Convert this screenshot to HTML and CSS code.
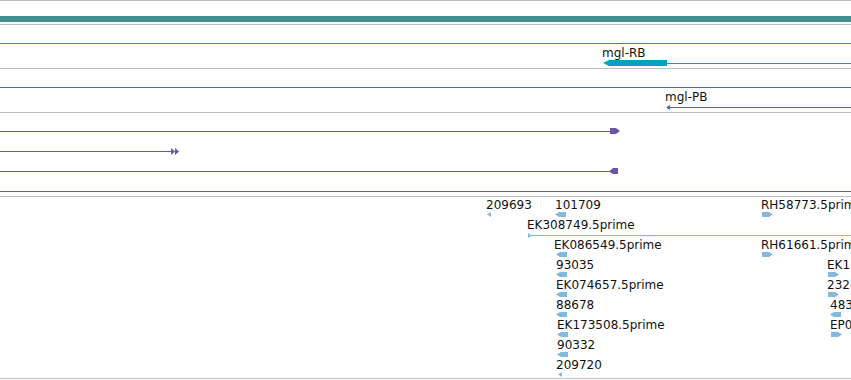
FILE: index.html
```html
<!DOCTYPE html>
<html lang="en">
<head>
    <meta charset="UTF-8">
    <title>Genome Tracks</title>
    <link rel="stylesheet" href="styles.css">
</head>
<body>

    <div class="browser">
        <div class="overview">
            <div class="overview-bar"></div>
        </div>

        <!-- gene models -->
        <div class="track track-genes">
            <svg class="track-canvas" width="851" height="43">
                <line x1="0" y1="18.5" x2="851" y2="18.5" class="gene-line"/>
                <polygon points="603,38 609,35 667,35 667,41 609,41" class="gene-cds"/>
                <line x1="667" y1="38.5" x2="851" y2="38.5" class="gene-line"/>
            </svg>
            <span class="label" style="left:602px; top:22px">mgl-RB</span>
        </div>

        <!-- proteins -->
        <div class="track track-proteins">
            <svg class="track-canvas" width="851" height="43">
                <line x1="0" y1="18.5" x2="851" y2="18.5" class="protein-line"/>
                <polygon points="666,38.5 670,36 670,41" class="protein-head"/>
                <line x1="669" y1="38.5" x2="851" y2="38.5" class="protein-line"/>
            </svg>
            <span class="label" style="left:665px; top:22px">mgl-PB</span>
        </div>

        <!-- alignments -->
        <div class="track track-align">
            <svg class="track-canvas" width="851" height="83">
                <line x1="0" y1="18.5" x2="611" y2="18.5" class="align-line"/>
                <polygon points="610,15 616,15 620,18 616,21 610,21" class="align-head"/>

                <line x1="0" y1="38.5" x2="172" y2="38.5" class="align-line"/>
                <polygon points="171,35 175,38.5 171,42" class="align-head"/>
                <polygon points="175,35 179,38.5 175,42" class="align-head"/>

                <line x1="0" y1="58.5" x2="610" y2="58.5" class="align-line"/>
                <polygon points="609,58.5 613,55 618,55 618,61 613,61" class="align-head"/>

                <line x1="0" y1="78.5" x2="851" y2="78.5" class="align-line"/>
            </svg>
        </div>

        <!-- ESTs -->
        <div class="track track-ests">
            <svg class="track-canvas" width="851" height="181">
                <defs>
                    <polygon id="larr" points="0,2.5 4,0 11,0 11,5 4,5"/>
                    <polygon id="rarr" points="0,0 7,0 11,2.5 7,5 0,5"/>
                    <polygon id="ltip" points="0,2.5 4,0 4,5"/>
                    <polygon id="rtip" points="0,0 4,2.5 0,5"/>
                </defs>
                <g class="est">
                    <use href="#ltip" x="487" y="15"/>
                    <use href="#larr" x="555" y="15"/>
                    <use href="#rarr" x="762" y="15"/>

                    <use href="#rtip" x="528" y="36"/>
                    <line x1="531" y1="38.5" x2="851" y2="38.5" class="est-line"/>

                    <use href="#larr" x="556" y="55"/>
                    <use href="#rarr" x="762" y="55"/>

                    <use href="#larr" x="556" y="75"/>
                    <use href="#rarr" x="828" y="75"/>

                    <use href="#larr" x="556" y="95"/>
                    <use href="#rarr" x="828" y="95"/>

                    <use href="#larr" x="556" y="115"/>
                    <use href="#larr" x="830" y="115"/>

                    <use href="#larr" x="557" y="135"/>
                    <use href="#rarr" x="831" y="135"/>

                    <use href="#larr" x="557" y="155"/>

                    <use href="#ltip" x="558" y="175"/>
                </g>
            </svg>
            <span class="label" style="left:486px; top:2px">209693</span>
            <span class="label" style="left:555px; top:2px">101709</span>
            <span class="label" style="left:761px; top:2px">RH58773.5prime</span>
            <span class="label" style="left:527px; top:22px">EK308749.5prime</span>
            <span class="label" style="left:554px; top:42px">EK086549.5prime</span>
            <span class="label" style="left:761px; top:42px">RH61661.5prime</span>
            <span class="label" style="left:556px; top:62px">93035</span>
            <span class="label" style="left:827px; top:62px">EK137253.5prime</span>
            <span class="label" style="left:556px; top:82px">EK074657.5prime</span>
            <span class="label" style="left:827px; top:82px">232681</span>
            <span class="label" style="left:556px; top:102px">88678</span>
            <span class="label" style="left:830px; top:102px">48321</span>
            <span class="label" style="left:557px; top:122px">EK173508.5prime</span>
            <span class="label" style="left:830px; top:122px">EP022319.5prime</span>
            <span class="label" style="left:557px; top:142px">90332</span>
            <span class="label" style="left:556px; top:162px">209720</span>
        </div>
    </div>

</body>
</html>
```

FILE: styles.css
```css
body {
    margin: 0;
    background-color: #ffffff;
    font-family: "DejaVu Sans", Verdana, sans-serif;
    font-size: 12px;
    color: #111;
}

.browser {
    width: 851px;
    overflow: hidden;
}

.overview {
    border-top: 1px solid #bfbfbf;
    padding-top: 15px;
    height: 8px;
}

.overview-bar {
    height: 6px;
    background-color: #3f8e90;
}

.track {
    position: relative;
    border-top: 1px solid #bfbfbf;
    overflow: hidden;
}

.track-genes,
.track-proteins {
    height: 43px;
}

.track-align {
    height: 83px;
}

.track-ests {
    height: 181px;
    border-bottom: 1px solid #bfbfbf;
}

.track-canvas {
    display: block;
    position: absolute;
    top: 0;
    left: 0;
}

.label {
    position: absolute;
    line-height: 12px;
    white-space: nowrap;
}

.gene-line {
    stroke: #1e95b1;
    stroke-width: 1;
}

.gene-cds {
    fill: #05a0c2;
}

.protein-line {
    stroke: #3b6cc0;
    stroke-width: 1;
}

.protein-head {
    fill: #3b6cc0;
}

.align-line {
    stroke: #6c56a4;
    stroke-width: 1;
}

.align-head {
    fill: #6c56a4;
}

.est {
    fill: #84b9de;
}

.est-line {
    stroke: #84b9de;
    stroke-width: 1;
}
```
